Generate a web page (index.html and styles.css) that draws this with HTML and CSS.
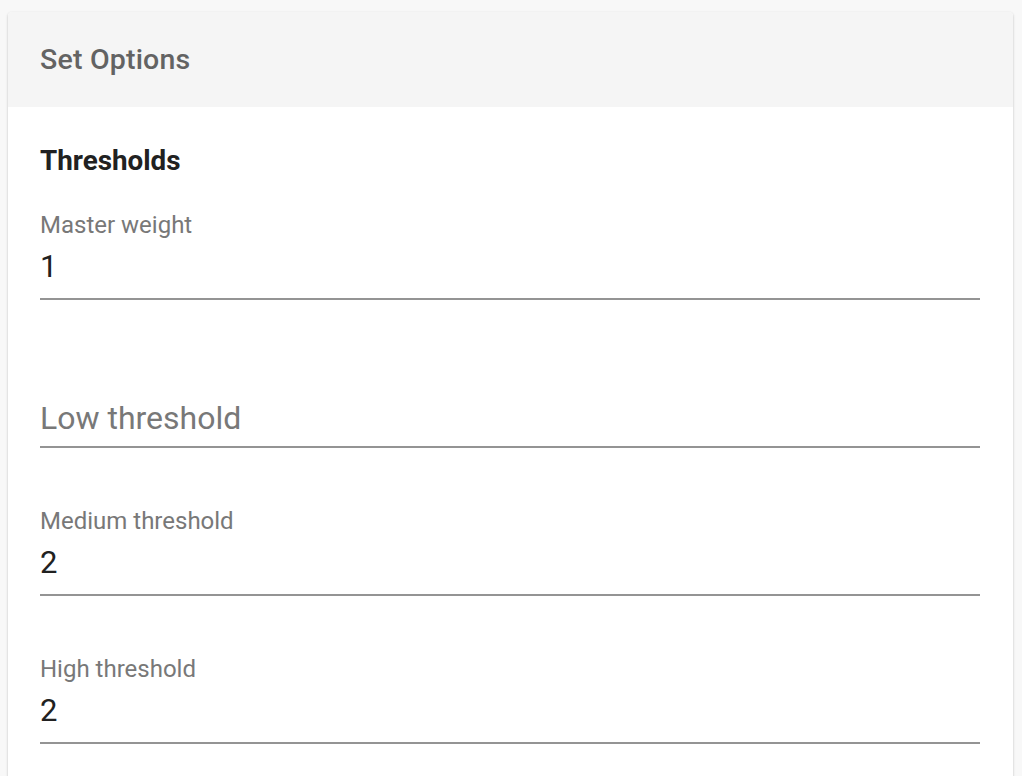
FILE: index.html
```html
<!DOCTYPE html>
<html lang="en">
<head>
<meta charset="utf-8">
<title>Set Options</title>
<link rel="stylesheet" href="styles.css">
</head>
<body>
<div class="card">
  <div class="card-header">Set Options</div>
  <div class="card-body">
    <h2 class="section-title">Thresholds</h2>
    <div class="field">
      <div class="field-label">Master weight</div>
      <div class="field-input">1</div>
    </div>
    <div class="field">
      <div class="field-label field-label--hidden">Low threshold</div>
      <div class="field-input field-input--empty">Low threshold</div>
    </div>
    <div class="field">
      <div class="field-label">Medium threshold</div>
      <div class="field-input">2</div>
    </div>
    <div class="field">
      <div class="field-label">High threshold</div>
      <div class="field-input">2</div>
    </div>
  </div>
</div>
</body>
</html>
```
FILE: styles.css
```css
html, body {
  margin: 0;
  padding: 0;
  background: #f8f8f8;
  font-family: Roboto, "Noto Sans", Arial, sans-serif;
  overflow: hidden;
}
body {
  padding: 12px 8px 0 8px;
  height: 776px;
  box-sizing: border-box;
}
.card {
  width: 1005px;
  background: #ffffff;
  border-radius: 4px;
  box-shadow: 0 1px 3px rgba(0,0,0,0.16), 0 1px 2px rgba(0,0,0,0.10);
  overflow: hidden;
  height: 800px;
}
.card-header {
  height: 95px;
  box-sizing: border-box;
  background: #f5f5f5;
  padding: 0 32px;
  display: flex;
  align-items: center;
  font-size: 28.5px;
  font-weight: 500;
  color: #636363;
  letter-spacing: 0.2px;
}
.card-body {
  padding: 38px 33px 0 32px;
  display: flex;
  flex-direction: column;
}
.section-title {
  margin: 0;
  font-size: 27.8px;
  line-height: 32px;
  font-weight: 700;
  color: #212121;
}
.field {
  margin-top: 60px;
  display: flex;
  flex-direction: column;
}
.section-title + .field {
  margin-top: 35px;
}
.field-label {
  font-size: 24px;
  line-height: 27px;
  color: #787878;
}
.field-label--hidden {
  visibility: hidden;
}
.field-input {
  margin-top: 10px;
  font-size: 31px;
  line-height: 36px;
  color: #212121;
  padding-bottom: 13px;
  border-bottom: 2px solid #949494;
}
.field-input--empty {
  font-size: 32px;
  color: #787878;
  margin-top: 13px;
  padding-bottom: 10px;
}
```
